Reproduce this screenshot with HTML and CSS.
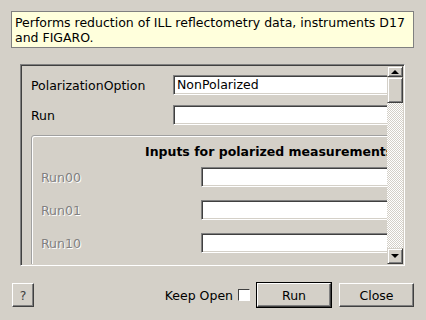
FILE: index.html
```html
<!DOCTYPE html>
<html lang="en">
<head>
  <meta charset="UTF-8" />
  <title>ReflectometryILLAutoProcess</title>
  <link rel="stylesheet" href="styles.css">
</head>
<body>

  <div class="dialog">
    <div class="description">
      Performs reduction of ILL reflectometry data, instruments D17<br>
      and FIGARO.
    </div>

    <div class="scroll-frame">
      <div class="scroll-view">
        <div class="content">
          <div class="row">
            <label class="prop-label">PolarizationOption</label>
            <div class="field combo">NonPolarized</div>
          </div>
          <div class="row">
            <label class="prop-label">Run</label>
            <div class="field"></div>
          </div>

          <div class="group">
            <div class="group-title">Inputs for polarized measurements</div>
            <div class="group-row">
              <label class="prop-label disabled">Run00</label>
              <div class="field"></div>
            </div>
            <div class="group-row">
              <label class="prop-label disabled">Run01</label>
              <div class="field"></div>
            </div>
            <div class="group-row">
              <label class="prop-label disabled">Run10</label>
              <div class="field"></div>
            </div>
          </div>
        </div>

        <div class="scrollbar">
          <div class="sb-btn sb-up"><span class="arrow-up"></span></div>
          <div class="sb-thumb"></div>
          <div class="sb-track"></div>
          <div class="sb-btn"><span class="arrow-down"></span></div>
        </div>
      </div>
    </div>

    <div class="button-bar">
      <button class="btn help-btn">?</button>
      <div class="spacer"></div>
      <label class="keep-open">Keep Open <span class="checkbox"></span></label>
      <div class="default-wrap"><button class="btn run-btn">Run</button></div>
      <button class="btn close-btn">Close</button>
    </div>
  </div>

</body>
</html>
```

FILE: styles.css
```css
* {
  box-sizing: border-box;
}

body {
  margin: 0;
  width: 426px;
  height: 320px;
  overflow: hidden;
  background: #d4d0c8;
  font-family: "DejaVu Sans", sans-serif;
  font-size: 12px;
  color: #000;
}

.dialog {
  display: flex;
  flex-direction: column;
  padding: 11px 12px 0 11px;
}

.description {
  height: 37px;
  padding: 3px 3px;
  line-height: 15px;
  font-size: 12.5px;
  background: #ffffdc;
  border: 1px solid #808080;
}

/* sunken frame around the property list */
.scroll-frame {
  margin: 16px 9px 0 9px;
  height: 202px;
  border: 1px solid;
  border-color: #808080 #fff #fff #808080;
  box-shadow: inset 1px 1px 0 #404040, inset -1px -1px 0 #d4d0c8;
  padding: 1px;
}

.scroll-view {
  display: flex;
  height: 100%;
}

.content {
  flex: 1;
  overflow: hidden;
  padding: 9px 0 0 9px;
}

.row {
  display: flex;
  align-items: center;
  height: 20px;
  margin-bottom: 10px;
}

.prop-label {
  flex: none;
  width: 142px;
  font-size: 12.5px;
  white-space: nowrap;
}

.prop-label.disabled {
  width: 160px;
  color: #808080;
  text-shadow: 1px 1px 0 #fff;
}

.field {
  flex: none;
  width: 240px;
  height: 20px;
  background: #fff;
  border: 1px solid;
  border-color: #808080 #fff #fff #808080;
  box-shadow: inset 1px 1px 0 #404040, inset -1px -1px 0 #d4d0c8;
}

.combo {
  padding: 1px 0 0 3px;
  font-size: 12.5px;
  line-height: 16px;
}

.group {
  margin-top: 4px;
  width: 420px;
  height: 140px;
  border: 1px solid #a0a0a0;
  border-radius: 3px;
  box-shadow: inset 1px 1px 0 #fff;
  padding: 0 0 0 9px;
}

.group-title {
  font-weight: bold;
  font-size: 12.5px;
  padding: 4px 0 0 104px;
  height: 31px;
  line-height: 24px;
  white-space: nowrap;
}

.group-row {
  display: flex;
  align-items: center;
  height: 20px;
  margin-bottom: 13px;
}

/* vertical scrollbar */
.scrollbar {
  flex: none;
  width: 16px;
  display: flex;
  flex-direction: column;
}

.sb-btn,
.sb-thumb {
  flex: none;
  height: 16px;
  background: #d4d0c8;
  border: 1px solid;
  border-color: #d4d0c8 #404040 #404040 #d4d0c8;
  box-shadow: inset 1px 1px 0 #fff, inset -1px -1px 0 #808080;
  display: flex;
  align-items: center;
  justify-content: center;
}

.sb-up {
  height: 11px;
  align-items: flex-end;
  padding-bottom: 2px;
}

.sb-thumb {
  height: 26px;
}

.sb-track {
  flex: 1;
  background: repeating-conic-gradient(#fff 0 25%, #d4d0c8 0 50%) 0 0 / 2px 2px;
}

.arrow-up,
.arrow-down {
  width: 0;
  height: 0;
  border-left: 4px solid transparent;
  border-right: 4px solid transparent;
}

.arrow-up {
  border-bottom: 4px solid #000;
}

.arrow-down {
  border-top: 4px solid #000;
}

/* bottom buttons */
.button-bar {
  display: flex;
  align-items: center;
  margin-top: 16px;
  padding-left: 1px;
}

.spacer {
  flex: 1;
}

.btn {
  font-family: "DejaVu Sans", sans-serif;
  font-size: 12.5px;
  height: 24px;
  background: #d4d0c8;
  color: #000;
  border: 1px solid;
  border-color: #fff #404040 #404040 #fff;
  box-shadow: inset -1px -1px 0 #808080;
  padding: 0;
}

.help-btn {
  width: 22px;
  color: #404040;
}

.keep-open {
  display: flex;
  align-items: center;
  gap: 5px;
  font-size: 12.5px;
  margin-right: 6px;
}

.checkbox {
  width: 12px;
  height: 12px;
  background: #fff;
  border: 1px solid;
  border-color: #404040 #fff #fff #404040;
}

.default-wrap {
  border: 1px solid #000;
  margin-right: 7px;
}

.run-btn {
  display: block;
  width: 74px;
}

.close-btn {
  width: 75px;
}
```
